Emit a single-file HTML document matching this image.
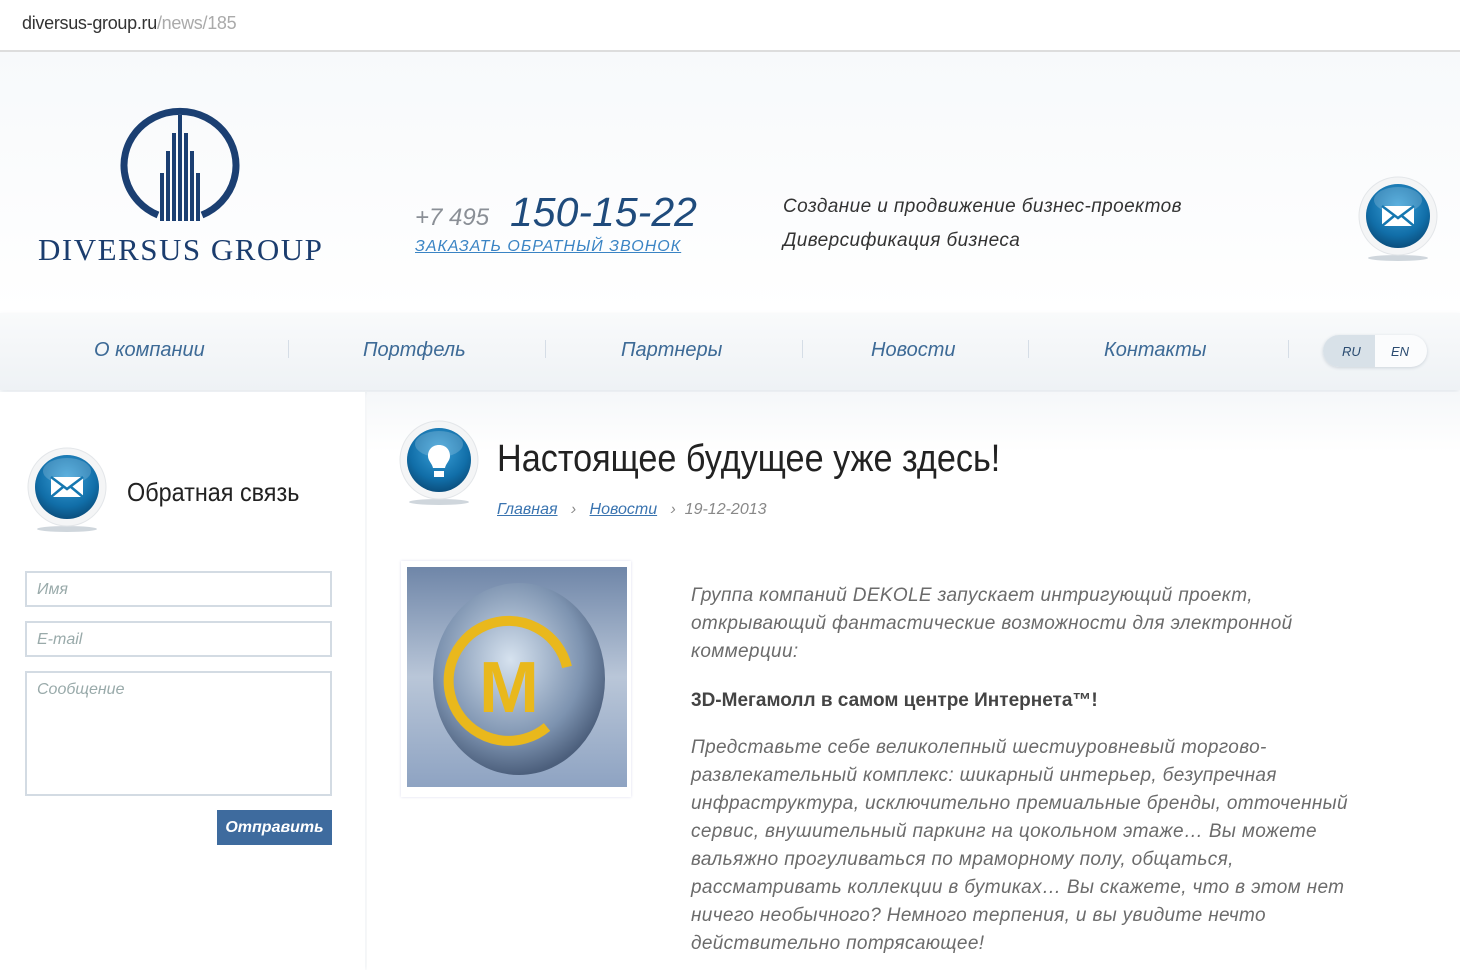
<!DOCTYPE html>
<html><head><meta charset="utf-8"><style>
body{margin:0;width:1460px;height:970px;overflow:hidden;background:#fff;font-family:"Liberation Sans","DejaVu Sans",sans-serif;position:relative}
.a{position:absolute;white-space:nowrap}
.i{font-style:italic}
.nav{color:#3d6a96;font-size:20px;font-style:italic;top:339px}
.sep{position:absolute;top:340px;width:1px;height:18px;background:#d5dde6}
.inp{position:absolute;left:25px;width:307px;border:2px solid #d3dbe3;background:#fff;color:#9aa;font-style:italic;font-size:16px;box-sizing:border-box;padding:8px 10px}
.t{left:691px;font-size:19px;font-style:italic;color:#6b6b6b;letter-spacing:.35px}
</style></head><body>
<svg width="0" height="0" style="position:absolute"><defs>
<radialGradient id="bg" cx="50%" cy="35%" r="65%"><stop offset="0" stop-color="#3aa0d8"/><stop offset="0.7" stop-color="#116ea8"/><stop offset="1" stop-color="#0b4f7e"/></radialGradient>
<symbol id="ic" viewBox="0 0 80 90"><ellipse cx="40" cy="82" rx="30" ry="3" fill="#cfd6dc"/><circle cx="40" cy="40" r="39" fill="#f4f5f6" stroke="#e3e6e9"/><circle cx="40" cy="40" r="32" fill="url(#bg)"/><ellipse cx="40" cy="24" rx="24" ry="13" fill="#fff" opacity=".18"/></symbol>
</defs></svg>
<div class="a" style="left:22px;top:13px;font-size:18px;color:#333;letter-spacing:-.3px">diversus-group.ru<span style="color:#aaa">/news/185</span></div>
<div class="a" style="left:0;top:50px;width:1460px;height:2px;background:#ddd"></div>
<div class="a" style="left:0;top:52px;width:1460px;height:260px;background:linear-gradient(#f7f9fb,#fff)"></div>
<svg class="a" style="left:118px;top:103px" width="124" height="120" viewBox="0 0 124 120">
<path d="M40 112 A56 54 0 1 1 84 112" fill="none" stroke="#1b3f72" stroke-width="7"/>
<g fill="#1b3f72"><rect x="42" y="70" width="4" height="48"/><rect x="48" y="48" width="4" height="70"/><rect x="54" y="30" width="4" height="88"/><rect x="60" y="12" width="4" height="106"/><rect x="66" y="30" width="4" height="88"/><rect x="72" y="48" width="4" height="70"/><rect x="78" y="70" width="4" height="48"/></g></svg>
<div class="a" style="left:38px;top:232px;font-family:'Liberation Serif',serif;font-size:31px;color:#1b3d6e;letter-spacing:1.5px">DIVERSUS GROUP</div>
<div class="a i" style="left:415px;top:204px;font-size:24px;color:#8a8f96">+7 495</div>
<div class="a i" style="left:510px;top:189px;font-size:41px;color:#1f4b7c">150-15-22</div>
<div class="a i" style="left:415px;top:238px;font-size:16px;color:#3a84c4;text-decoration:underline;letter-spacing:1px">ЗАКАЗАТЬ ОБРАТНЫЙ ЗВОНОК</div>
<div class="a i" style="left:783px;top:196px;font-size:19px;color:#333;letter-spacing:.4px">Создание и продвижение бизнес-проектов</div>
<div class="a i" style="left:783px;top:230px;font-size:19px;color:#333;letter-spacing:.4px">Диверсификация бизнеса</div>
<svg class="a" style="left:1358px;top:176px" width="80" height="90"><use href="#ic"/><path d="M24 30h32v20h-32z" fill="#fff"/><path d="M24 30l16 12 16-12M24 50l12-10M56 50l-12-10" stroke="#1577b0" stroke-width="2.5" fill="none"/></svg>
<div class="a" style="left:0;top:313px;width:1460px;height:77px;background:linear-gradient(#f9fafb,#eef2f5);box-shadow:0 3px 6px #e2e7ec"></div>
<div class="a nav" style="left:94px">О компании</div>
<div class="sep" style="left:288px"></div>
<div class="a nav" style="left:363px">Портфель</div>
<div class="sep" style="left:545px"></div>
<div class="a nav" style="left:621px">Партнеры</div>
<div class="sep" style="left:802px"></div>
<div class="a nav" style="left:871px">Новости</div>
<div class="sep" style="left:1028px"></div>
<div class="a nav" style="left:1104px">Контакты</div>
<div class="sep" style="left:1288px"></div>
<div class="a" style="left:1323px;top:335px;width:104px;height:32px;border-radius:16px;background:#fbfcfd;box-shadow:0 1px 3px #ccd3da;overflow:hidden">
<div style="position:absolute;left:0;top:0;width:52px;height:32px;background:#d8e1e8"></div>
<div style="position:absolute;left:19px;top:9px;font-size:13px;font-style:italic;color:#2a4b70">RU</div>
<div style="position:absolute;left:68px;top:9px;font-size:13px;font-style:italic;color:#2a4b70">EN</div></div>
<div class="a" style="left:0;top:392px;width:365px;height:578px;background:#fff;box-shadow:2px 0 6px #eef1f4"></div>
<div class="a" style="left:367px;top:392px;width:1093px;height:578px;background:linear-gradient(#f5f7f9,#fff 60px)"></div>
<svg class="a" style="left:27px;top:447px" width="80" height="90"><use href="#ic"/><path d="M24 30h32v20h-32z" fill="#fff"/><path d="M24 30l16 12 16-12M24 50l12-10M56 50l-12-10" stroke="#1577b0" stroke-width="2.5" fill="none"/></svg>
<div class="a" style="left:127px;top:477px;font-size:26px;color:#222;transform:scaleX(.9);transform-origin:left">Обратная связь</div>
<div class="inp" style="top:571px;height:36px">Имя</div>
<div class="inp" style="top:621px;height:36px">E-mail</div>
<div class="inp" style="top:671px;height:125px">Сообщение</div>
<div class="a" style="left:217px;top:810px;width:115px;height:35px;background:#3e6b9e;color:#fff;font-style:italic;font-weight:bold;font-size:16px;text-align:center;line-height:35px">Отправить</div>
<svg class="a" style="left:399px;top:420px" width="80" height="90"><use href="#ic"/><path d="M40 25c-7 0-11 5-11 11 0 5 4 7 5 12h12c1-5 5-7 5-12 0-6-4-11-11-11zM35 51h10v6h-10z" fill="#fff"/></svg>
<div class="a" style="left:497px;top:438px;font-size:38px;color:#222;transform:scaleX(.9);transform-origin:left">Настоящее будущее уже здесь!</div>
<div class="a i" style="left:497px;top:501px;font-size:16px;color:#888"><span style="color:#3a74b0;text-decoration:underline">Главная</span>&nbsp;&nbsp; ›&nbsp;&nbsp; <span style="color:#3a74b0;text-decoration:underline">Новости</span>&nbsp;&nbsp; ›&nbsp; 19-12-2013</div>
<div class="a" style="left:401px;top:561px;width:230px;height:236px;background:#fff;box-shadow:0 0 3px #dde"></div>
<svg class="a" style="left:407px;top:567px" width="220" height="220">
<defs><linearGradient id="sk" x1="0" y1="0" x2="0" y2="1"><stop offset="0" stop-color="#6f86a8"/><stop offset=".5" stop-color="#b9c6d8"/><stop offset="1" stop-color="#8ea3c2"/></linearGradient>
<radialGradient id="gl" cx="45%" cy="40%" r="60%"><stop offset="0" stop-color="#d6e2ef"/><stop offset=".7" stop-color="#7d93b0"/><stop offset="1" stop-color="#4c5f7c"/></radialGradient></defs>
<rect width="220" height="220" fill="url(#sk)"/><ellipse cx="112" cy="112" rx="86" ry="96" fill="url(#gl)"/>
<path d="M140 160 A60 60 0 1 1 160 100" fill="none" stroke="#e9b81c" stroke-width="10"/>
<text x="72" y="145" font-family="Liberation Sans" font-size="72" font-weight="bold" fill="#e9b81c">M</text></svg>
<div class="a t" style="top:585px">Группа компаний DEKOLE запускает интригующий проект,</div>
<div class="a t" style="top:613px">открывающий фантастические возможности для электронной</div>
<div class="a t" style="top:641px">коммерции:</div>
<div class="a" style="left:691px;top:690px;font-size:19px;font-weight:bold;color:#444">3D-Мегамолл в самом центре Интернета™!</div>
<div class="a t" style="top:737px">Представьте себе великолепный шестиуровневый торгово-</div>
<div class="a t" style="top:765px">развлекательный комплекс: шикарный интерьер, безупречная</div>
<div class="a t" style="top:793px">инфраструктура, исключительно премиальные бренды, отточенный</div>
<div class="a t" style="top:821px">сервис, внушительный паркинг на цокольном этаже… Вы можете</div>
<div class="a t" style="top:849px">вальяжно прогуливаться по мраморному полу, общаться,</div>
<div class="a t" style="top:877px">рассматривать коллекции в бутиках… Вы скажете, что в этом нет</div>
<div class="a t" style="top:905px">ничего необычного? Немного терпения, и вы увидите нечто</div>
<div class="a t" style="top:933px">действительно потрясающее!</div>
</body></html>
